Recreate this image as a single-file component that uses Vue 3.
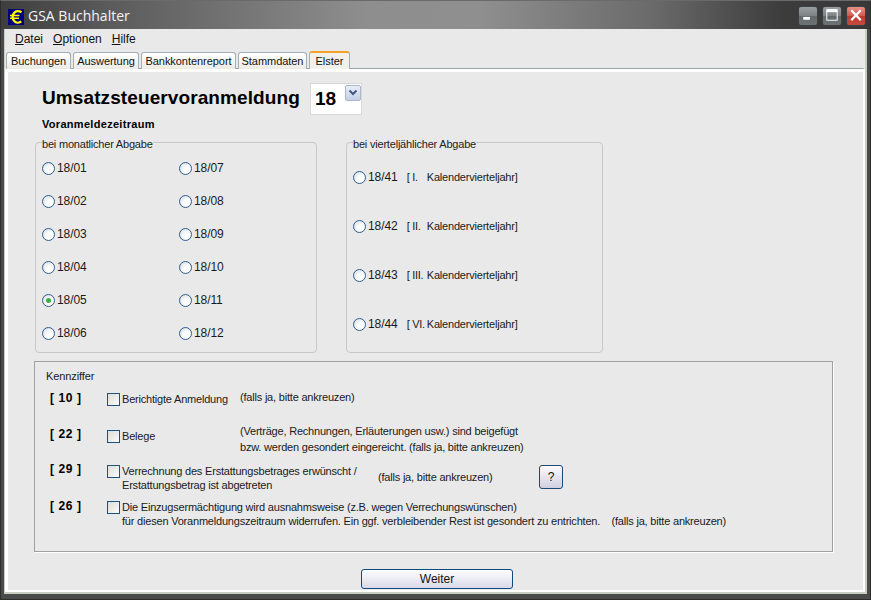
<script setup>
const col1 = ['18/01', '18/02', '18/03', '18/04', '18/05', '18/06']
const col2 = ['18/07', '18/08', '18/09', '18/10', '18/11', '18/12']
const quarters = [
  ['18/41', 'I.'],
  ['18/42', 'II.'],
  ['18/43', 'III.'],
  ['18/44', 'VI.'],
]
</script>

<template>
  <div class="window">
    <header class="titlebar">
      <svg class="logo" width="16" height="16" viewBox="0 0 16 16">
        <rect width="16" height="16" fill="#000080" />
        <path d="M13.5 3.4 C11.5 1.8 8.4 1.8 6.6 3.4 C5.2 4.7 4.6 6.4 4.6 8 C4.6 9.8 5.2 11.4 6.8 12.6 C8.6 14 11.6 13.8 13.2 12.4" fill="none" stroke="#ffff00" stroke-width="2.3" />
        <path d="M2 6.6 H11.5 M2 9.2 H11" stroke="#ffff00" stroke-width="1.5" />
      </svg>
      <span class="title">GSA Buchhalter</span>
      <div class="controls">
        <span class="ctl">
          <svg width="19" height="19" viewBox="0 0 19 19"><rect x="4.5" y="11" width="7" height="3" fill="#fff" /></svg>
        </span>
        <span class="ctl">
          <svg width="19" height="19" viewBox="0 0 19 19"><rect x="4" y="3.5" width="11" height="11" fill="none" stroke="#fff" /><rect x="4" y="3" width="11" height="3" fill="#fff" /></svg>
        </span>
        <span class="ctl close">
          <svg width="19" height="19" viewBox="0 0 19 19"><path d="M4.5 4 L14.5 14.5 M14.5 4 L4.5 14.5" stroke="#fff" stroke-width="2.4" /></svg>
        </span>
      </div>
    </header>

    <div class="client">
      <nav class="menu">
        <span><u>D</u>atei</span>
        <span><u>O</u>ptionen</span>
        <span><u>H</u>ilfe</span>
      </nav>
      <div class="tabs">
        <span class="tab t1">Buchungen</span>
        <span class="tab t2">Auswertung</span>
        <span class="tab t3">Bankkontenreport</span>
        <span class="tab t4">Stammdaten</span>
        <span class="tab t5 active">Elster</span>
      </div>

      <main class="panel">
        <div class="heading">
          <h1>Umsatzsteuervoranmeldung</h1>
          <div class="combo">
            <span class="combo-value">18</span>
            <span class="combo-btn">
              <svg width="10" height="8" viewBox="0 0 10 8"><path d="M1.5 1.5 L5 5 L8.5 1.5" fill="none" stroke="#44587f" stroke-width="2" /></svg>
            </span>
          </div>
        </div>
        <h2>Voranmeldezeitraum</h2>

        <div class="groups">
          <fieldset class="group monthly">
            <legend>bei monatlicher Abgabe</legend>
            <div class="month-grid">
              <div class="month-col">
                <label v-for="m in col1" :key="m" class="radio-row">
                  <span class="radio" :class="{ on: m === '18/05' }"></span>{{ m }}
                </label>
              </div>
              <div class="month-col">
                <label v-for="m in col2" :key="m" class="radio-row">
                  <span class="radio"></span>{{ m }}
                </label>
              </div>
            </div>
          </fieldset>

          <fieldset class="group quarterly">
            <legend>bei vierteljählicher Abgabe</legend>
            <div class="quarter-col">
              <label v-for="q in quarters" :key="q[0]" class="radio-row">
                <span class="radio"></span>{{ q[0] }}
                <span class="q-num">[ {{ q[1] }}</span>
                <span class="q-text">Kalendervierteljahr]</span>
              </label>
            </div>
          </fieldset>
        </div>

        <section class="kz">
          <div class="kz-caption">Kennziffer</div>

          <div class="kz-row r10">
            <b class="num">[ 10 ]</b>
            <span class="check"></span>
            <span class="c-text w-a">Berichtigte Anmeldung</span>
            <span class="note">(falls ja, bitte ankreuzen)</span>
          </div>

          <div class="kz-row r22">
            <b class="num">[ 22 ]</b>
            <span class="check"></span>
            <span class="c-text w-a">Belege</span>
            <span class="note two">(Verträge, Rechnungen, Erläuterungen usw.) sind beigefügt<br />bzw. werden gesondert eingereicht. (falls ja, bitte ankreuzen)</span>
          </div>

          <div class="kz-row r29">
            <b class="num">[ 29 ]</b>
            <span class="check"></span>
            <span class="c-text w-b">Verrechnung des Erstattungsbetrages erwünscht /<br />Erstattungsbetrag ist abgetreten</span>
            <span class="note n29">(falls ja, bitte ankreuzen)</span>
            <button class="help">?</button>
          </div>

          <div class="kz-row r26">
            <b class="num">[ 26 ]</b>
            <span class="check"></span>
            <span class="c-text">Die Einzugsermächtigung wird ausnahmsweise (z.B. wegen Verrechungswünschen)<br />für diesen Voranmeldungszeitraum widerrufen. Ein ggf. verbleibender Rest ist gesondert zu entrichten.&nbsp;&nbsp;&nbsp;&nbsp;(falls ja, bitte ankreuzen)</span>
          </div>
        </section>

        <div class="footer">
          <button class="next">Weiter</button>
        </div>
      </main>
    </div>
  </div>
</template>

<style>
html, body { margin: 0; padding: 0; background: #444; overflow: hidden; }
</style>

<style scoped>
.window {
  width: 871px;
  height: 600px;
  box-sizing: border-box;
  display: flex;
  flex-direction: column;
  background: #4a4a4a;
  font-family: "Liberation Sans", Arial, sans-serif;
  font-size: 12px;
  color: #111;
  border: 1px solid #2e2e2e;
  border-top-color: #6a6a6a;
  padding: 0 3px 5px 3px;
  overflow: hidden;
}
.titlebar {
  height: 28px;
  flex: none;
  margin: 0 -3px;
  padding: 0 4px 0 7px;
  display: flex;
  align-items: center;
  color: #fff;
  background: linear-gradient(90deg, #3e3e3e 0%, #5a5a5a 12%, #8e8e8e 42%, #8f8f8f 55%, #6a6a6a 75%, #3c3c3c 90%, #383838 100%);
}
.logo { flex: none; margin-top: 4px; }
.title { margin-left: 4px; color: #f4f4f4; margin-top: 1px; font-family: "Open Sans", "Liberation Sans", sans-serif; font-size: 14px; }
.controls { margin-left: auto; display: flex; gap: 4px; margin-top: 1px; }
.ctl {
  width: 20px;
  height: 20px;
  box-sizing: border-box;
  border: 1px solid #3a3f42;
  border-radius: 3px;
  background: linear-gradient(#9aa0a2 0%, #7d8386 48%, #646a6c 52%, #6e7476 100%);
  display: flex;
  align-items: center;
  justify-content: center;
}
.ctl.close { background: linear-gradient(#e88f86 0%, #d25a50 48%, #bb3a30 52%, #c54a40 100%); }

.client {
  flex: 1;
  min-height: 0;
  display: flex;
  flex-direction: column;
  background: #e9e9e9;
  border-bottom: 2px solid #c9cec2;
  border-right: 2px solid #c9cec2;
  border-left: 1px solid #c9cec2;
}
.menu {
  height: 20px;
  flex: none;
  display: flex;
  align-items: center;
  gap: 10px;
  padding-left: 10px;
  font-size: 12px;
}
.tabs {
  height: 20px;
  flex: none;
  display: flex;
  align-items: flex-end;
  gap: 2px;
  padding-left: 1px;
  position: relative;
  z-index: 1;
  margin-bottom: -1px;
}
.tab {
  height: 17px;
  box-sizing: border-box;
  display: flex;
  align-items: center;
  justify-content: center;
  background: linear-gradient(#ffffff, #ecebe3);
  border: 1px solid #a3b0b8;
  border-bottom: none;
  border-radius: 3px 3px 0 0;
  font-size: 11px;
  letter-spacing: -0.05px;
}
.t1 { width: 65px; }
.t2 { width: 66px; }
.t3 { width: 95px; }
.t4 { width: 69px; }
.t5 { width: 41px; }
.tab.active {
  height: 18px;
  background: #f1f1ec;
  border-top: 2px solid #f4a42a;
}
.panel {
  flex: 1;
  min-height: 0;
  box-sizing: border-box;
  border-top: 1px solid #9aa3a6;
  border-left: 3px solid #fff;
  border-right: 2px solid #fff;
  border-bottom: 2px solid #fff;
  box-shadow: inset 0 3px 0 #fff;
  padding: 14px 0 0 25px;
  background: #e9e9e9;
  display: flex;
  flex-direction: column;
}
.heading { display: flex; align-items: flex-start; height: 32px; margin-left: 9px; }
h1 {
  margin: 3px 0 0;
  font-size: 19px;
  line-height: 24px;
  font-weight: 700;
  color: #000;
  letter-spacing: 0.1px;
}
.combo {
  width: 52px;
  height: 32px;
  box-sizing: border-box;
  margin-left: 10px;
  background: #fff;
  border: 1px solid #d8d8d8;
  display: flex;
  align-items: flex-start;
  justify-content: space-between;
}
.combo-value { font-size: 19px; line-height: 24px; font-weight: 700; margin: 3px 0 0 4px; color: #000; }
.combo-btn {
  width: 16px;
  height: 16px;
  box-sizing: border-box;
  margin-top: 1px;
  border: 1px solid #a9b7c9;
  border-radius: 2px;
  background: linear-gradient(#e9eef8, #c3cfe8);
  display: flex;
  align-items: center;
  justify-content: center;
}
h2 {
  margin: 2px 0 0 9px;
  font-size: 11px;
  line-height: 14px;
  font-weight: 700;
  color: #000;
  letter-spacing: 0.3px;
}
.groups { display: flex; margin-top: 4px; height: 218px; }
.group {
  margin: 0;
  padding: 0;
  min-width: 0;
  box-sizing: border-box;
  height: 218px;
  border: 1px solid #c8c8c8;
  border-radius: 4px;
}
.group legend {
  padding: 0;
  margin-left: 6px;
  line-height: 14px;
  font-size: 11px;
  letter-spacing: -0.2px;
  color: #222;
  position: relative;
  top: 2px;
}
.monthly { width: 282px; margin-left: 2px; }
.quarterly { width: 257px; margin-left: 29px; }
.month-grid { display: flex; padding: 11px 0 0 6px; }
.month-col { width: 137px; display: flex; flex-direction: column; gap: 17px; }
.quarter-col { display: flex; flex-direction: column; gap: 33px; padding: 20px 0 0 6px; }
.radio-row { display: flex; align-items: center; height: 16px; font-size: 12px; letter-spacing: -0.1px; white-space: pre; color: #1a1a1a; }
.radio {
  width: 13px;
  height: 13px;
  box-sizing: border-box;
  flex: none;
  margin-right: 2px;
  border: 1px solid #2f5e8e;
  border-radius: 50%;
  background: radial-gradient(circle at 65% 65%, #ffffff 30%, #d5dde3 90%);
  display: flex;
  align-items: center;
  justify-content: center;
}
.radio.on::after {
  content: "";
  width: 5px;
  height: 5px;
  border-radius: 50%;
  background: #3cae3c;
}
.q-num { width: 20px; margin-left: 6px; white-space: pre; font-size: 11px; letter-spacing: -0.3px; }
.q-text { font-size: 11px; letter-spacing: -0.2px; }
.kz {
  box-sizing: border-box;
  width: 799px;
  height: 191px;
  margin: 8px 0 0 1px;
  border: 1px solid #a0a0a0;
  box-shadow: 1px 1px 0 #fff;
  padding: 7px 0 0 11px;
  display: flex;
  flex-direction: column;
  color: #1a1a1a;
}
.kz-caption { line-height: 14px; font-size: 11px; letter-spacing: -0.1px; }
.kz-row { display: flex; align-items: flex-start; font-size: 11px; letter-spacing: -0.2px; }
.num { width: 57px; flex: none; margin-left: 4px; font-size: 12px; line-height: 14px; letter-spacing: 0.6px; color: #000; margin-top: -3px; }
.check {
  width: 13px;
  height: 13px;
  box-sizing: border-box;
  flex: none;
  border: 1px solid #1c5180;
  background: linear-gradient(135deg, #dcdcd7, #fbfbfb);
  margin-right: 2px;
}
.c-text { line-height: 14px; white-space: pre; margin-top: -1px; }
.w-a { width: 118px; }
.w-b { width: 256px; }
.note { line-height: 14px; white-space: pre; }
.r10 { margin-top: 10px; height: 37px; }
.r10 .num { margin-top: -2px; }
.r10 .note { margin-top: -3px; }
.r22 { height: 35px; }
.r22 .note { line-height: 16px; margin-top: -7px; }
.r29 { height: 36px; }
.r26 .num { margin-top: -2px; }
.n29 { margin-top: 5px; width: 115px; }
.help {
  width: 24px;
  height: 24px;
  margin: 0 0 0 46px;
  padding: 0;
  border: 1px solid #1c4a72;
  border-radius: 3px;
  background: linear-gradient(#fbfbfd, #cfcfe2);
  font: 12px "Liberation Sans", sans-serif;
  color: #111;
}
.footer { display: flex; justify-content: center; width: 808px; margin-top: 17px; }
.next {
  width: 152px;
  height: 20px;
  padding: 0;
  border: 1px solid #0f4a7e;
  border-radius: 3px;
  background: linear-gradient(#ffffff, #d8d8e8);
  font: 12px "Liberation Sans", sans-serif;
  color: #111;
}
</style>
